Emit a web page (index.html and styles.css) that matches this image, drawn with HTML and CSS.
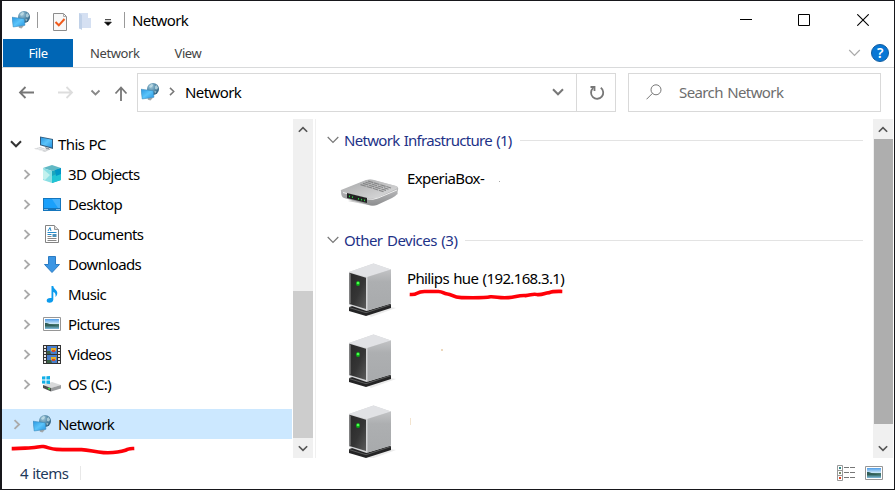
FILE: index.html
```
<!DOCTYPE html>
<html lang="en">
<head>
<meta charset="utf-8">
<title>Network</title>
<link rel="stylesheet" href="styles.css">
</head>
<body>
<svg class="defs" width="0" height="0" aria-hidden="true">
  <defs>
    <linearGradient id="screen" x1="0" y1="0" x2="1" y2="1"><stop offset="0" stop-color="#2a96e0"/><stop offset=".5" stop-color="#5bc4fa"/><stop offset="1" stop-color="#2391df"/></linearGradient>
    <radialGradient id="globe" cx=".35" cy=".3" r=".8"><stop offset="0" stop-color="#a3c9db"/><stop offset=".45" stop-color="#5e93b0"/><stop offset="1" stop-color="#245474"/></radialGradient>
    <linearGradient id="front" x1="0" y1="0" x2="1" y2="1"><stop offset="0" stop-color="#272727"/><stop offset=".55" stop-color="#353535"/><stop offset="1" stop-color="#5b5b5b"/></linearGradient>
    <linearGradient id="side" x1="0" y1="0" x2="0" y2="1"><stop offset="0" stop-color="#c2c3c5"/><stop offset=".3" stop-color="#adafb1"/><stop offset="1" stop-color="#a8aaac"/></linearGradient>
    <linearGradient id="sky" x1="0" y1="0" x2="0" y2="1"><stop offset="0" stop-color="#4f9de8"/><stop offset=".5" stop-color="#d5ecf9"/><stop offset=".55" stop-color="#47766a"/><stop offset=".72" stop-color="#3f7674"/><stop offset="1" stop-color="#82bce0"/></linearGradient>
    <linearGradient id="metal" x1="0" y1="0" x2="0" y2="1"><stop offset="0" stop-color="#d2d2d3"/><stop offset="1" stop-color="#8d8e90"/></linearGradient>
    <linearGradient id="lid" x1="0" y1="0" x2="1" y2="1"><stop offset="0" stop-color="#a6a7a8"/><stop offset="1" stop-color="#dededf"/></linearGradient>
  </defs>
  <symbol id="network" viewBox="0 0 18 18">
    <circle cx="12" cy="6" r="6" fill="url(#globe)"/>
    <path d="M8 3.200 10.500 1l2 .8-1.500 2.200-2 .7zM14 3.500l1.500-1.500 1.600 2.500-1 2-2-.6zM13.500 8l2 .5-1.500 2z" fill="#c4e0e8" opacity=".75"/>
    <path d="M6.500 15.500 9 14l3 .8-2.500 2.700-2.500-.7z" fill="#a4a8aa"/>
    <path d="M0 6.200 12.200 7.800 13 14.300 1.200 16z" fill="url(#screen)"/>
    <path d="M0 6.200 12.200 7.800 13 14.300 1.200 16z" fill="none" stroke="#3382b5" stroke-width=".5"/>
  </symbol>
  <symbol id="pc" viewBox="0 0 20 18">
    <path d="M6 1.500 19 4v10L6 10.200z" fill="#335b7c"/><path d="m7 2.600 11 2.100v7.800L7 9.500z" fill="url(#screen)"/>
    <path d="m0 13.800 6-1.700 9 2.800-4 2.200z" fill="#d2d4d6"/><path d="m2 14 7 2m-5-3 8 2" stroke="#fff" stroke-width=".6"/><path d="m11 12 4 1 1 2-4-1z" fill="#8f999f"/>
  </symbol>
  <symbol id="cube" viewBox="0 0 18 18">
    <path d="m9 0 9 3-9 3-9-3z" fill="#61b8c4"/><path d="m0 3 9 3v12l-9-3z" fill="#8adfe4"/><path d="m9 6 9-3v12l-9 3z" fill="#1ba6bd"/><path d="m9 11 9-4v8l-9 3z" fill="#20c4d4"/><path d="m0 4 7 6-5 5-2-1z" fill="#c3f1ee"/><path d="m12 5 6-2v6l-5 2z" fill="#0096c7"/>
  </symbol>
  <symbol id="desktop" viewBox="0 0 18 13">
    <path d="M0 0h18v13H0z" fill="#1576bd"/><path d="M1 1h16v9H1z" fill="#1aa0fb"/><path d="M9 1h8v9h-2z" fill="#42b0fc"/><path d="M1.500 11.500h1m1 0h1m9 0h1m1 0h1" stroke="#fff"/>
  </symbol>
  <symbol id="document" viewBox="0 0 14 18">
    <path d="M.5.5h9l4 4v13H.5z" fill="#fff" stroke="#838383"/><path d="M9.500.5v4h4" fill="#ddd" stroke="#999"/><path d="m3 6 2-3.500L6 6M2.500 7.500h9M2.500 9.500h4" fill="none" stroke="#258bcb"/><path d="M7.500 9h4v3h-4z" fill="#4c91b9"/><path d="M2.500 11.500h4m-4 2h9m-9 2h9" stroke="#888"/>
  </symbol>
  <symbol id="download" viewBox="0 0 16 17"><path d="M4.500.5h7v8h4L8 16.500.5 8.500h4z" fill="#3b96e4" stroke="#2c7bc2"/></symbol>
  <symbol id="music" viewBox="0 0 11 17"><path d="M5 0h1.800c.2 3 4 4 4 7 0 2-1 3-1.800 4 .5-3-.6-4.500-2.200-5v7.500c0 2-1.700 3.300-3.800 3.300C1.200 16.800.2 15.800.2 14.500.2 12.700 2 11.500 5 12z" fill="#0c9bed"/></symbol>
  <symbol id="picture" viewBox="0 0 18 14"><path d="M.5.5h17v13H.5z" fill="#fff" stroke="#969696"/><path d="M2 2h14v10H2z" fill="url(#sky)"/><path d="M2 6c4 0 5 2 14 3H2z" fill="#315e58"/></symbol>
  <symbol id="video" viewBox="0 0 18 19">
    <path d="M0 0h18v19H0z" fill="#333"/><path d="M4 1h10v8H4zm0 9h10v8H4z" fill="#487ecb"/><path d="M4 6h3l1 3H4zm0 9h4l1 3H4z" fill="#3a6045"/><path d="M8 3h5v3H8zm0 9h5v3H8z" fill="#e8af24"/><path d="M9 5h3v2H9zm0 9h3v2H9z" fill="#ce4b2b"/><path d="M2 1v17M16 1v17" stroke="#e8e8e8" stroke-width="2" stroke-dasharray="2 1"/>
  </symbol>
  <symbol id="drive" viewBox="0 0 20 16">
    <path d="m1 9 9-3 9 3-10 3z" fill="#d8d9da"/><path d="M0 .6 3.400.3v3.100H0zM4.400.2 8 0v3.400H4.400zM0 4.400h3.400v3.400L0 7.400zM4.400 4.400H8V8l-3.600-.3z" fill="#12afe7"/><path d="m1 9 8 3v3.500L1 12z" fill="#4b4d4d"/><path d="m9 12 10-3v3.500l-10 3z" fill="#999b9d"/><path d="M6 12.300 8 13" stroke="#42dc45" stroke-width="1.400"/>
  </symbol>
  <symbol id="right" viewBox="0 0 8 12"><path d="m1.300 1.200 5 4.800-5 4.800" fill="none" stroke="currentColor" stroke-width="2"/></symbol>
  <symbol id="down" viewBox="0 0 12 8"><path d="m1 1.300 5 5 5-5" fill="none" stroke="currentColor" stroke-width="2"/></symbol>
  <symbol id="thin-down" viewBox="0 0 12 8"><path d="m.7 1 5.300 5.300L11.300 1" fill="none" stroke="currentColor" stroke-width="1.200"/></symbol>
  <symbol id="server" viewBox="0 0 48 54">
    <path d="m20 52 22-8 6 1-25 9z" fill="#ddd" opacity=".6"/><path d="m1 44 17-5 25 2v4L18 53 1 48z" fill="#242425"/><path d="m1 44.500 17 5.200L43 41.500" fill="none" stroke="#68696a" stroke-width=".8"/>
    <path d="M1 9 25.500.5 43 6.500v34L18.500 48 1 42z" fill="#d3d4d6"/><path d="M1 9 25.500.5 43 6.500 18.500 14z" fill="#e1e2e5"/><path d="m19.500 14 23.500-7.500v34l-23.500 7z" fill="url(#side)"/><path d="m1.500 9.800 16.500 5V46L1.500 41z" fill="url(#front)"/><path d="M2.500 10.500v30" stroke="#777" stroke-width=".7"/><ellipse cx="10" cy="20.500" rx="2" ry="2.600" fill="#0bac16"/><circle cx="10" cy="20" r="1.300" fill="#4dff4d"/>
  </symbol>
  <symbol id="router" viewBox="0 0 60 30">
    <path d="m8 23 25 5 25-12-2-5z" fill="#aaa" opacity=".6"/><path d="M1 13 27 2q3-1 6 0l23 6q3 1 2 4l-1 4q-1 2-5 4L37 27q-4 1-8 0L4 20q-3-1-3-7z" fill="url(#metal)"/><path d="M1 12 26 2q4-1 7-.2L56 8q3 1 0 3L37 20q-4 1-9 0L3 14q-3-1-2-2z" fill="url(#lid)"/><path d="M3 14.500 28 21q5 1 10-1l19-8" fill="none" stroke="#efefef"/><path d="m7 15 20 5v5L7 20z" fill="#222"/><path d="m9 18.200 1 .2m2 .6 1 .2m5 1.500 1 .2m2 .6 1 .2m2 .5 1 .2" stroke="#2bd044" stroke-width="1.600"/><path d="m28 3 23 7M25.500 4.200l23 7M23 5.400l23 7M20.500 6.600l23 7" stroke="#858687" stroke-width="1.100" stroke-dasharray="5.600 .8"/>
  </symbol>
</svg>

<div class="window">
  <header class="titlebar">
    <svg class="i-network title-icon"><use href="#network"/></svg>
    <span class="sep first"></span>
    <svg class="props" width="14" height="18" viewBox="0 0 14 18"><path d="M.5.5h10l3 3v14H.5z" fill="#f8f8f8" stroke="#8c8c8c"/><path d="M10.500.5v3h3" fill="none" stroke="#aaa"/><path d="m2.500 9 3.300 3.300L11.500 6" fill="none" stroke="#f05a1b" stroke-width="2"/></svg>
    <svg class="folder" width="12" height="17" viewBox="0 0 12 17"><path d="M0 0h9v5h3v10H3l-3 1z" fill="#d5e0f2"/><path d="m0 0 3 2v15l-3-2z" fill="#c0d1e8"/></svg>
    <svg class="qat" width="8" height="8" viewBox="0 0 8 8"><path d="M1 .7h6M.7 3.200h6.600L4 6.500z" stroke="#111" stroke-width=".9"/></svg>
    <span class="sep second"></span>
    <h1 class="title">Network</h1>
    <div class="controls">
      <svg width="12" height="12"><path d="M0 5.500h12" stroke="#000"/></svg>
      <svg width="12" height="12"><path d="M.5.5h11v11H.5z" fill="none" stroke="#000"/></svg>
      <svg width="12" height="12"><path d="m.3.3 11.400 11.400m0-11.400L.3 11.700" stroke="#000" stroke-width="1.100"/></svg>
    </div>
  </header>
  <nav class="ribbon">
    <span class="file">File</span><span class="tab-network">Network</span><span class="tab-view">View</span>
    <svg class="collapse" width="13" height="8"><use href="#thin-down"/></svg><span class="help">?</span>
  </nav>
  <div class="navigation">
    <svg class="arrows" width="134" height="38" viewBox="0 0 134 38" fill="none" stroke-width="1.800">
      <path d="M32 19.500H18m5.500-5.500L18 19.500l5.500 5.500" stroke="#777"/><path d="M56 19.500h14M64.500 14l5.500 5.500-5.500 5.500" stroke="#ddd"/><path d="m89.500 17.500 4 4 4-4" stroke="#888"/><path d="M119 28V14.500m-5.500 6 5.500-6 5.500 6" stroke="#777"/>
    </svg>
    <div class="address">
      <svg class="i-network"><use href="#network"/></svg><svg class="crumb" width="6" height="9"><use href="#right"/></svg><span>Network</span>
      <svg class="address-down" width="12" height="8"><use href="#down"/></svg>
      <div class="refresh"><svg width="16" height="16" viewBox="0 0 16 16" fill="none" stroke="#777" stroke-width="1.800"><path d="M11.800 2.800A6.100 6.100 0 1 1 4 3.200M1.500 2h4v4"/></svg></div>
    </div>
    <div class="search"><svg width="16" height="16" viewBox="0 0 16 16" fill="none" stroke="#777"><circle cx="10" cy="5.800" r="5"/><path d="M6.500 9.300.5 15.300"/></svg><span>Search Network</span></div>
  </div>
  <main class="content">
    <aside class="tree">
      <div class="node root"><svg class="open" width="12" height="8"><use href="#down"/></svg><svg class="pic" width="20" height="18"><use href="#pc"/></svg><span>This PC</span></div>
      <div class="node"><svg class="chev" width="8" height="11"><use href="#right"/></svg><svg class="pic" width="18" height="18"><use href="#cube"/></svg><span>3D Objects</span></div>
      <div class="node"><svg class="chev" width="8" height="11"><use href="#right"/></svg><svg class="pic" width="18" height="13"><use href="#desktop"/></svg><span>Desktop</span></div>
      <div class="node"><svg class="chev" width="8" height="11"><use href="#right"/></svg><svg class="pic" width="18" height="18"><use href="#document"/></svg><span>Documents</span></div>
      <div class="node"><svg class="chev" width="8" height="11"><use href="#right"/></svg><svg class="pic" width="18" height="17"><use href="#download"/></svg><span>Downloads</span></div>
      <div class="node"><svg class="chev" width="8" height="11"><use href="#right"/></svg><svg class="pic" width="18" height="17"><use href="#music"/></svg><span>Music</span></div>
      <div class="node"><svg class="chev" width="8" height="11"><use href="#right"/></svg><svg class="pic" width="18" height="14"><use href="#picture"/></svg><span>Pictures</span></div>
      <div class="node"><svg class="chev" width="8" height="11"><use href="#right"/></svg><svg class="pic" width="18" height="19"><use href="#video"/></svg><span>Videos</span></div>
      <div class="node drive"><svg class="chev" width="8" height="11"><use href="#right"/></svg><svg class="pic" width="20" height="16"><use href="#drive"/></svg><span>OS (C:)</span></div>
      <div class="node selected"><svg class="chev" width="8" height="11"><use href="#right"/></svg><svg class="pic i-network"><use href="#network"/></svg><span>Network</span></div>
    </aside>
    <div class="scroll left"><svg width="10" height="7"><use href="#down"/></svg><div class="thumb"></div><svg width="10" height="7"><use href="#down"/></svg></div>
    <section class="devices">
      <h2 class="group infra"><svg width="12" height="8"><use href="#thin-down"/></svg><span>Network Infrastructure (1)</span></h2>
      <div class="device router"><svg width="60" height="30"><use href="#router"/></svg><span>ExperiaBox-</span><i class="dot"></i></div>
      <h2 class="group other"><svg width="12" height="8"><use href="#thin-down"/></svg><span>Other Devices (3)</span></h2>
      <div class="device server"><svg width="48" height="54"><use href="#server"/></svg><span>Philips hue (192.168.3.1)</span></div>
      <div class="device server"><svg width="48" height="54"><use href="#server"/></svg><i class="speck"></i></div>
      <div class="device server"><svg width="48" height="54"><use href="#server"/></svg><i class="tick"></i></div>
    </section>
    <div class="scroll right"><svg width="10" height="7"><use href="#down"/></svg><div class="thumb"></div><svg width="10" height="7"><use href="#down"/></svg></div>
  </main>
  <footer class="status"><span>4 items</span><i></i>
    <svg class="details" width="18" height="16" viewBox="0 0 18 16"><path d="M.5.5h5v15h-5zM.5 5.500h5m-5 5h5" fill="#fff" stroke="#999"/><path d="M7 2.500h5m1 0h5m-11 5h5m1 0h5m-11 5h5m1 0h5" stroke="#777"/><path d="M2 3h2" stroke="#388" stroke-width="2"/><path d="M2 8h2" stroke="#786" stroke-width="2"/><path d="M2 13h2" stroke="#d42" stroke-width="2"/></svg>
    <svg width="18" height="14"><use href="#picture"/></svg>
  </footer>
  <svg class="marks" width="895" height="490" viewBox="0 0 895 490"><path d="M13.500 448.600c8 0 11-.5 18-.8 6-.2 8-1.900 12-1.200 5 .8 7 2.500 13 2.800 10 .5 16 .2 25 .2 8 .2 13 2.500 22 3 9 .4 16-.3 22-2.300 1-.8 4-1.700 7-1.800M411.500 294.500c7 .2 4-2.800 13-3h14c5 .2 4 2 9 2.500 5 .5 5 3.500 14 3.600 14 .3 24 .2 29-.8 7-.2 8 1.500 18 .8 7-.1 9-2.400 17-2 6-.7 8-2.300 12-1 6 .5 6-1.600 12-2 3-1.300 6-1.300 11-1.200"/></svg>
</div>
</body>
</html>
```
FILE: styles.css
```
* { box-sizing: border-box; }
body { margin: 0; overflow: hidden; background: #fff; color: #000; font: 15px "Noto Sans", "Open Sans", sans-serif; letter-spacing: -.6px; word-spacing: 1px; }
svg { display: block; flex: none; }
.defs { position: absolute; }
.window { position: relative; width: 895px; height: 490px; border: 1px solid #17171b; border-left-width: 2px; background: #fff; }
.titlebar { height: 38px; display: flex; align-items: center; }
.i-network { width: 18px; height: 18px; }
.title-icon { margin-left: 10px; }
.sep { width: 1px; height: 16px; background: #999; }
.first { margin-left: 7px; }
.props { margin-left: 15px; margin-top: 3px; }
.folder { margin-left: 12px; margin-top: 3px; }
.qat { margin: 5px 0 0 13px; }
.second { margin-left: 12px; }
.title { margin: 0 0 0 7px; font-size: 15px; font-weight: 400; line-height: 38px; }
.controls { margin-left: auto; margin-right: 25px; display: flex; gap: 46px; }
.controls svg:nth-child(-n+2) { margin-left: -1px; margin-right: 1px; }
.ribbon { height: 29px; border-bottom: 1px solid #d9dadb; display: flex; align-items: center; color: #444; font-size: 13px; letter-spacing: -.4px; }
.file { width: 70px; height: 28px; margin-left: 1px; background: #0066b5; color: #fff; text-align: center; line-height: 28px; }
.tab-network { margin-left: 17px; }
.tab-view { margin-left: 35px; }
.collapse { margin-left: auto; color: #aaa; }
.help { width: 18px; height: 18px; margin: 0 5px 0 10px; border-radius: 50%; background: #0877d5; border: 1px solid #125da0; color: #fff; font-size: 14px; font-weight: 600; line-height: 16px; text-align: center; }
.navigation { height: 50px; padding-top: 5px; display: flex; }
.arrows { margin-right: 1px; }
.address { width: 479px; height: 39px; border: 1px solid #d9d9d9; display: flex; align-items: center; padding: 0 0 1px 3px; }
.crumb { margin: 0 10px 2px; color: #777; }
.address-down { margin-left: auto; margin-right: 12px; color: #777; }
.refresh { width: 39px; height: 37px; margin-bottom: -1px; border-left: 1px solid #d9d9d9; display: grid; place-items: center; padding-left: 1px; }
.search { margin-left: 12px; width: 253px; height: 39px; border: 1px solid #d9d9d9; display: flex; align-items: center; padding: 0 0 1px 17px; color: #6d6d6d; }
.search span { margin-left: 17px; letter-spacing: -.6px; }
.content { height: 340px; display: flex; padding-top: 1px; }
.tree { width: 290px; padding-top: 10px; }
.node { height: 30px; display: flex; align-items: center; padding-left: 21px; }
.node .chev { color: #aaa; }
.node .pic { margin-left: 12px; margin-right: 7px; }
.node.root { padding-left: 8px; }
.root .open { color: #333; }
.root .pic { margin-right: 4px; }
.node.drive .pic { margin-left: 11px; margin-right: 6px; }
.selected { margin-top: 10px; padding-left: 11px; background: #cce8ff; }
.scroll { width: 20px; height: 339px; background: #f0f0f0; color: #555; display: flex; flex-direction: column; align-items: center; padding: 7px 0 6px; }
.scroll svg:first-child { transform: rotate(180deg); }
.scroll svg:last-child { margin-top: auto; }
.left { margin-left: 1px; }
.left .thumb { width: 20px; height: 147px; margin-top: 158px; background: #cdcdcd; }
.devices { width: 558px; height: 339px; margin-left: 2px; border-left: 1px solid #f0f0f0; overflow: hidden; }
.group { height: 22px; margin: 10px 10px 0 11px; font-size: 15px; font-weight: 400; letter-spacing: -.5px; color: #1e3287; display: flex; align-items: center; }
.group.infra { letter-spacing: -.7px; }
.group svg { color: #777; }
.group span { margin-left: 5px; }
.group::after { content: ""; height: 1px; background: #e3e3e3; flex: 1; margin-left: 8px; }
.device { display: flex; align-items: flex-start; }
.device span { line-height: 20px; }
.router { height: 68px; margin: 10px 0 0 24px; padding-top: 8px; }
.router svg { margin-top: 9px; }
.router span { margin-left: 7px; margin-top: -1px; }
.dot { width: 1px; height: 1px; background: #aaa; margin: 12px 0 0 15px; }
.group.other { margin-top: 0; }
.server { height: 71px; margin-left: 32px; }
.other + .server { margin-top: 12px; }
.server span { margin: 5px 0 0 11px; letter-spacing: -.63px; }
.speck { width: 2px; height: 2px; background: #ecd8bd; margin: 15px 0 0 45px; }
.tick { width: 1px; height: 7px; background: #f3e4cf; margin: 13px 0 0 14px; }
.right .thumb { width: 19px; height: 285px; margin-top: 6px; background: #aeaeae; }
.status { height: 30px; display: flex; align-items: center; padding: 0 11px 0 18px; color: #1e395b; letter-spacing: -.6px; }
.status i { width: 1px; height: 14px; margin-left: 12px; background: #e8e8e8; }
.details { margin-left: auto; margin-right: 10px; }
.marks { position: absolute; left: -2px; top: -1px; pointer-events: none; }
.marks path { fill: none; stroke: #ff0008; stroke-width: 3.6; stroke-linecap: square; stroke-linejoin: round; }
```
